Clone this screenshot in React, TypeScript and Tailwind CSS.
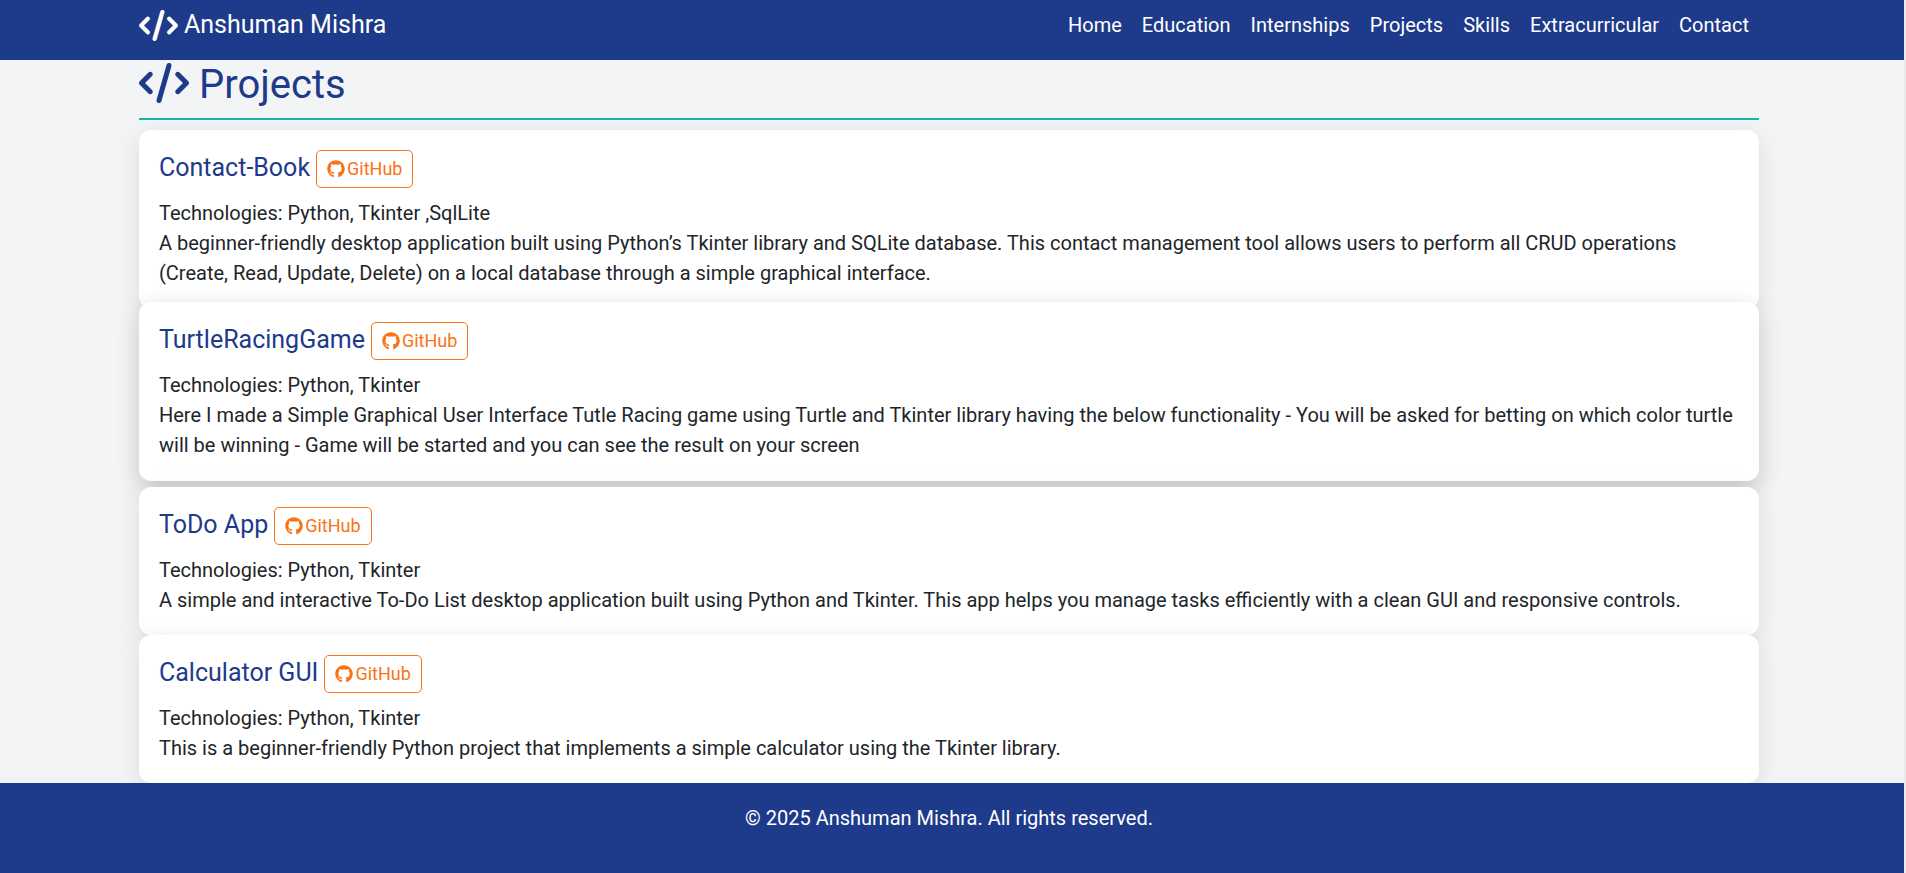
import { FaGithub, FaCode } from "react-icons/fa6";

const links = ["Home", "Education", "Internships", "Projects", "Skills", "Extracurricular", "Contact"];

type Project = { title: string; tech: string; text: string; tone: string };

const projects: Project[] = [
  {
    title: "Contact-Book",
    tech: "Python, Tkinter ,SqlLite",
    text: "A beginner-friendly desktop application built using Python’s Tkinter library and SQLite database. This contact management tool allows users to perform all CRUD operations (Create, Read, Update, Delete) on a local database through a simple graphical interface.",
    tone: "shadow-[0_5px_25px_rgba(0,0,0,0.1)]",
  },
  {
    title: "TurtleRacingGame",
    tech: "Python, Tkinter",
    text: "Here I made a Simple Graphical User Interface Tutle Racing game using Turtle and Tkinter library having the below functionality - You will be asked for betting on which color turtle will be winning - Game will be started and you can see the result on your screen",
    tone: "-mt-1.5 mb-1.5 pb-[21px] shadow-[0_8px_25px_rgba(0,0,0,0.2)]",
  },
  {
    title: "ToDo App",
    tech: "Python, Tkinter",
    text: "A simple and interactive To-Do List desktop application built using Python and Tkinter. This app helps you manage tasks efficiently with a clean GUI and responsive controls.",
    tone: "shadow-[0_5px_25px_rgba(0,0,0,0.1)]",
  },
  {
    title: "Calculator GUI",
    tech: "Python, Tkinter",
    text: "This is a beginner-friendly Python project that implements a simple calculator using the Tkinter library.",
    tone: "shadow-[0_5px_25px_rgba(0,0,0,0.1)]",
  },
];

function ProjectCard({ title, tech, text, tone }: Project) {
  return (
    <article className={`relative rounded-xl bg-white p-5 ${tone}`}>
      <div className="mb-2.5 flex items-start gap-1.5">
        <h2 className="pt-[3px] text-[25px] leading-[30px] text-[#1e3a8a]">{title}</h2>
        <a
          href="#github"
          className="flex h-[38px] items-center gap-0.5 rounded-[5px] border border-[#f97316] px-2.5 text-[18px] text-[#f97316]"
        >
          <FaGithub className="size-[18px]" />
          GitHub
        </a>
      </div>
      <p>Technologies: {tech}</p>
      <p>{text}</p>
    </article>
  );
}

export default function App() {
  return (
    <div className="flex min-h-screen flex-col border-r-2 border-[#e9e9ea] bg-[#f3f4f6] font-[Roboto,sans-serif] text-[20px] leading-[30px] text-[#212529]">
      <header className="bg-[#1e3a8a] pr-1.5 text-white">
        <div className="mx-auto flex h-[60px] max-w-[1650px] items-start justify-between px-[15px]">
          <a href="#home" className="flex items-center gap-1.5 pt-[9px] text-[25px] leading-[32px]">
            <FaCode className="h-[31px] w-[39px] stroke-current [stroke-width:8]" />
            Anshuman Mishra
          </a>
          <nav className="flex gap-5 px-2.5 pt-2.5">
            {links.map((l) => (
              <a key={l} href={`#${l.toLowerCase()}`}>
                {l}
              </a>
            ))}
          </nav>
        </div>
      </header>
      <main className="pr-1.5">
        <div className="mx-auto max-w-[1650px] px-[15px]">
          <h1 className="mb-2.5 flex h-[60px] items-start gap-2.5 border-b-2 border-[#14b8a6] pt-px text-[40px] leading-[48px] text-[#1e3a8a]">
            <FaCode className="mt-0.5 h-10 w-[50px]" />
            Projects
          </h1>
          {projects.map((p) => (
            <ProjectCard key={p.title} {...p} />
          ))}
        </div>
      </main>
      <footer className="relative grow bg-[#1e3a8a] pt-5 pr-1.5 pb-10 text-center text-white">
        <p>© 2025 Anshuman Mishra. All rights reserved.</p>
      </footer>
    </div>
  );
}
